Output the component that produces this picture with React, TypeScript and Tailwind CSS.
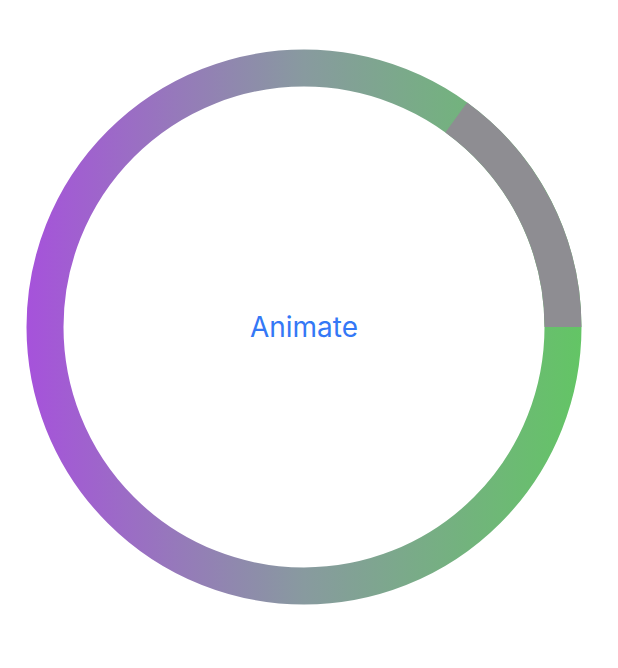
import React from "react";

export default function App() {
  const size = 556;
  const c = size / 2;
  const r = 259;
  const sw = 37;
  const a = (54 * Math.PI) / 180;
  const ex = c + r * Math.cos(a);
  const ey = c - r * Math.sin(a);
  return (
    <div className="w-[618px] h-[668px] bg-white flex items-start pt-[49px] pl-[26px]">
      <div className="relative w-[556px] h-[556px]">
        <svg width={size} height={size} viewBox={`0 0 ${size} ${size}`}>
          <defs>
            <linearGradient id="g" x1="0" y1="0" x2={size} y2="0" gradientUnits="userSpaceOnUse">
              <stop offset="0" stopColor="#a652db" />
              <stop offset="0.5" stopColor="#889a9f" />
              <stop offset="1" stopColor="#63c565" />
            </linearGradient>
          </defs>
          <circle cx={c} cy={c} r={r} fill="none" stroke="url(#g)" strokeWidth={sw} />
          <path
            d={`M ${c + r} ${c} A ${r} ${r} 0 0 0 ${ex} ${ey}`}
            fill="none"
            stroke="#8e8d92"
            strokeWidth={sw}
          />
        </svg>
        <div className="absolute inset-0 flex items-center justify-center">
          <span className="text-[28px] text-[#3478f6] font-['Inter',sans-serif] leading-none">Animate</span>
        </div>
      </div>
    </div>
  );
}
